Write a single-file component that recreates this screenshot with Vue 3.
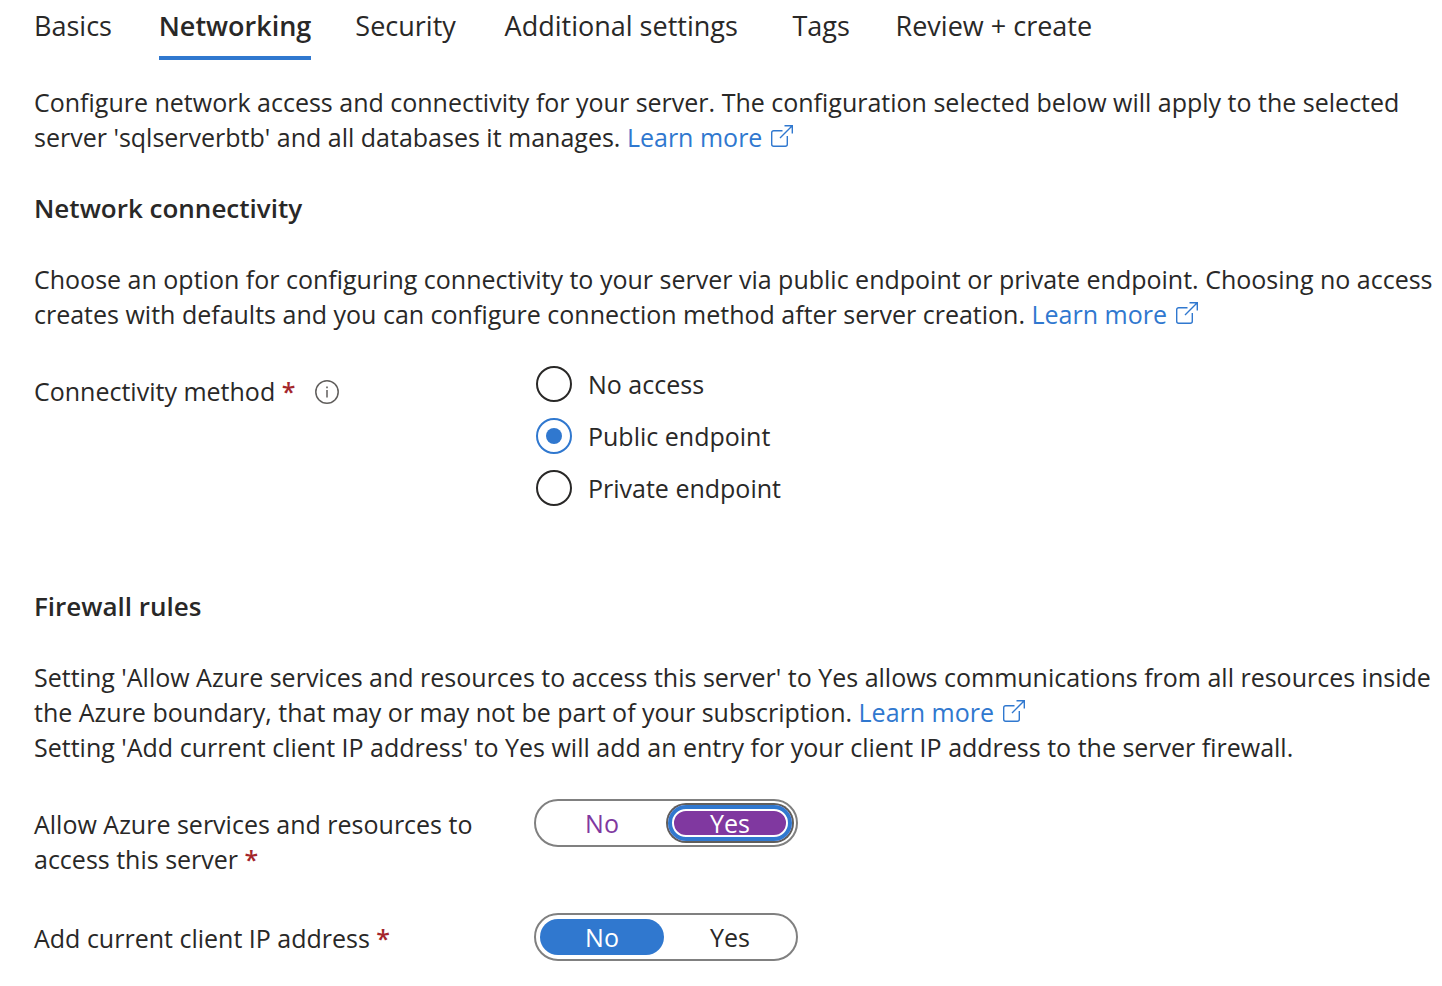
<script setup>
import { ref } from 'vue'

const tabs = ['Basics', 'Networking', 'Security', 'Additional settings', 'Tags', 'Review + create']
const activeTab = ref('Networking')

const methods = ['No access', 'Public endpoint', 'Private endpoint']
const method = ref('Public endpoint')

const allowAzure = ref('Yes')
const addClientIp = ref('No')
const choices = ['No', 'Yes']
</script>

<template>
  <main class="page">
    <nav class="tabs" role="tablist" aria-label="Create server steps">
      <button
        v-for="tab in tabs"
        :key="tab"
        type="button"
        role="tab"
        class="tab"
        :class="{ active: tab === activeTab }"
        :aria-selected="tab === activeTab"
        :data-title="tab"
        @click="activeTab = tab"
      >{{ tab }}</button>
    </nav>

    <p class="intro">
      Configure network access and connectivity for your server. The configuration selected below will apply to the selected
      server 'sqlserverbtb' and all databases it manages.
      <a href="#" class="link">Learn more<svg class="external" viewBox="0 0 22 22" aria-hidden="true"><path d="M11.5 5.700H2.700a2 2 0 0 0-2 2v11.600a2 2 0 0 0 2 2h11.600a2 2 0 0 0 2-2V11M9 13L21 1M13.500 0.700H21.300V8.500" /></svg></a>
    </p>

    <h2>Network connectivity</h2>
    <p>
      Choose an option for configuring connectivity to your server via public endpoint or private endpoint. Choosing no access
      creates with defaults and you can configure connection method after server creation.
      <a href="#" class="link">Learn more<svg class="external" viewBox="0 0 22 22" aria-hidden="true"><path d="M11.5 5.700H2.700a2 2 0 0 0-2 2v11.600a2 2 0 0 0 2 2h11.600a2 2 0 0 0 2-2V11M9 13L21 1M13.500 0.700H21.300V8.500" /></svg></a>
    </p>

    <div class="field">
      <div class="label">
        <span id="method-label">Connectivity method <span class="required">*</span></span>
        <svg class="info" viewBox="0 0 24 24" aria-hidden="true">
          <circle cx="12" cy="12" r="11.200" />
          <path d="M12 10V17.500" />
          <path class="dot" d="M11.200 6.500h1.600v1.800h-1.600z" />
        </svg>
      </div>
      <div class="radios" role="radiogroup" aria-labelledby="method-label">
        <label v-for="m in methods" :key="m" class="radio">
          <input v-model="method" type="radio" name="method" :value="m" />
          {{ m }}
        </label>
      </div>
    </div>

    <h2 class="firewall">Firewall rules</h2>
    <p>
      Setting 'Allow Azure services and resources to access this server' to Yes allows communications from all resources inside
      the Azure boundary, that may or may not be part of your subscription.
      <a href="#" class="link">Learn more<svg class="external" viewBox="0 0 22 22" aria-hidden="true"><path d="M11.5 5.700H2.700a2 2 0 0 0-2 2v11.600a2 2 0 0 0 2 2h11.600a2 2 0 0 0 2-2V11M9 13L21 1M13.500 0.700H21.300V8.500" /></svg></a>
      <br />
      Setting 'Add current client IP address' to Yes will add an entry for your client IP address to the server firewall.
    </p>

    <div class="field">
      <div id="azure-label" class="label">
        <span>Allow Azure services and resources to access this server <span class="required">*</span></span>
      </div>
      <div class="toggle highlighted" role="radiogroup" aria-labelledby="azure-label">
        <label v-for="c in choices" :key="c" class="option" :class="{ chosen: c === allowAzure }">
          <input v-model="allowAzure" type="radio" name="allow-azure" :value="c" />{{ c }}
        </label>
      </div>
    </div>

    <div class="field">
      <div id="ip-label" class="label">
        <span>Add current client IP address <span class="required">*</span></span>
      </div>
      <div class="toggle" role="radiogroup" aria-labelledby="ip-label">
        <label v-for="c in choices" :key="c" class="option" :class="{ chosen: c === addClientIp }">
          <input v-model="addClientIp" type="radio" name="client-ip" :value="c" />{{ c }}
        </label>
      </div>
    </div>
  </main>
</template>

<style>
body {
  background: #fff;
}
</style>

<style scoped>
.page {
  padding: 8px 0 24px 34px;
  color: #292827;
  font-family: "Segoe UI", "Open Sans", "Noto Sans", sans-serif;
  font-size: 25px;
  line-height: 35px;
}

.tabs {
  display: flex;
  gap: 44px;
}

.tab {
  display: grid;
  justify-items: start;
  padding: 0 0 12px;
  border: 0;
  border-bottom: 4px solid transparent;
  background: none;
  color: inherit;
  font: inherit;
  font-size: 27px;
  line-height: 36px;
  white-space: nowrap;
  cursor: pointer;
}

/* Reserves the semibold width so tabs keep their place when selected. */
.tab::after {
  content: attr(data-title);
  height: 0;
  overflow: hidden;
  visibility: hidden;
  font-weight: 600;
}

.tab.active {
  border-bottom-color: #3078cf;
  font-weight: 600;
}

p {
  margin: 0;
}

.intro {
  margin-top: 25px;
}

h2 {
  margin: 36px 0;
  font-size: 26px;
  font-weight: 600;
  line-height: 35px;
}

.link {
  color: #3078cf;
  text-decoration: none;
  white-space: nowrap;
}

.external {
  width: 22px;
  height: 22px;
  margin-left: 9px;
  fill: none;
  stroke: currentColor;
  stroke-width: 1.4;
}

.field {
  display: grid;
  grid-template-columns: 500px 1fr;
  align-items: start;
  margin-top: 36px;
}

p + .field {
  margin-top: 34px;
}

.label {
  display: flex;
  align-items: center;
  gap: 20px;
  padding: 8px 48px 0 0;
}

.required {
  color: #a4262c;
  font-weight: 600;
}

.info {
  width: 24px;
  height: 24px;
  fill: none;
  stroke: #605e5c;
  stroke-width: 1.5;
}

.info .dot {
  fill: #605e5c;
  stroke: none;
}

.radios {
  display: grid;
  gap: 16px;
  padding-left: 2px;
}

.radio {
  display: flex;
  align-items: center;
  gap: 16px;
  height: 36px;
}

.radio input {
  display: grid;
  place-items: center;
  width: 36px;
  height: 36px;
  margin: 0;
  border: 2px solid #292827;
  border-radius: 50%;
  appearance: none;
}

.radio input:checked {
  border-color: #3078cf;
}

.radio input:checked::after {
  content: "";
  width: 16px;
  height: 16px;
  border-radius: 50%;
  background: #3078cf;
}

.firewall {
  margin-top: 83px;
}

.toggle {
  display: flex;
  gap: 4px;
  justify-self: start;
  padding: 4px;
  border: 2px solid #808080;
  border-radius: 24px;
}

.option {
  position: relative;
  width: 124px;
  border-radius: 18px;
  line-height: 36px;
  text-align: center;
  cursor: pointer;
}

.option input {
  position: absolute;
  inset: 0;
  margin: 0;
  opacity: 0;
  cursor: pointer;
}

.option.chosen {
  background: #3078cf;
  color: #fff;
}

.highlighted .option {
  color: #8038a0;
}

.highlighted .option.chosen {
  background: #8038a0;
  box-shadow: 0 0 0 2px #605e5c, inset 0 0 0 4px #3078cf, inset 0 0 0 6px #fff;
  color: #fff;
}
</style>
